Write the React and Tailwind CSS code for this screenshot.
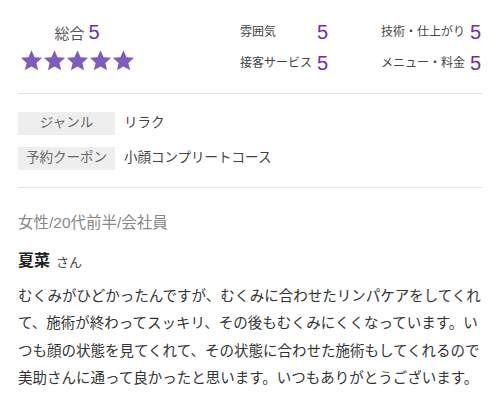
import React from 'react';

const font = { fontFamily: '"Liberation Sans", "Noto Sans CJK JP", sans-serif' };

const Star = () => (
    <svg viewBox="0 0 24 24" className="w-[23px] h-[23px]" fill="#7d5cc0">
        <path d="M12 1.2l3.2 7.3 7.9.7-6 5.3 1.8 7.8L12 18.2l-6.9 4.1 1.8-7.8-6-5.3 7.9-.7z" />
    </svg>
);

const Score = ({ label }) => (
    <div className="flex items-center justify-between whitespace-nowrap">
        <span className="text-[12px] text-[#444] leading-none">{label}</span>
        <span className="text-[20px] text-[#6a2fb0] leading-none">5</span>
    </div>
);

const App = () => (
    <div className="w-[500px] h-[400px] bg-white overflow-hidden px-[18px]" style={font}>
        <div className="flex h-[94px] border-b border-[#e2e2e2]">
            <div className="w-[118px] flex flex-col items-center pt-[22px]">
                <div className="flex items-end gap-[4px] leading-none">
                    <span className="text-[15px] text-[#555] pb-[1px]">総合</span>
                    <span className="text-[20px] text-[#6a2fb0]">5</span>
                </div>
                <div className="flex gap-0 mt-[7px]">
                    <Star /><Star /><Star /><Star /><Star />
                </div>
            </div>
            <div className="ml-[104px] grid grid-cols-[88px_100px] gap-x-[53px] gap-y-[11px] pt-[22px] h-fit">
                <Score label="雰囲気" />
                <Score label="技術・仕上がり" />
                <Score label="接客サービス" />
                <Score label="メニュー・料金" />
            </div>
        </div>

        <div className="flex flex-col gap-[12px] pt-[18px] pb-[17px] border-b border-[#e2e2e2]">
            <div className="flex items-center">
                <span className="w-[97px] h-[23px] bg-[#eeeeee] text-[#666] text-[13.5px] flex items-center justify-center">ジャンル</span>
                <span className="ml-[9px] text-[13.5px] text-[#444]">リラク</span>
            </div>
            <div className="flex items-center">
                <span className="w-[97px] h-[23px] bg-[#eeeeee] text-[#666] text-[13.5px] flex items-center justify-center">予約クーポン</span>
                <span className="ml-[9px] text-[13.5px] text-[#444]">小顔コンプリートコース</span>
            </div>
        </div>

        <div className="pt-[27px] text-[15.5px] text-[#888] leading-none">女性/20代前半/会社員</div>
        <div className="pt-[22px] flex items-end gap-[6px] leading-none">
            <span className="text-[16px] font-bold text-[#222]">夏菜</span>
            <span className="text-[13px] text-[#444]">さん</span>
        </div>
        <p className="mt-[14px] w-[470px] text-[14.5px] leading-[27.5px] text-[#333]">
            むくみがひどかったんですが、むくみに合わせたリンパケアをしてくれて、施術が終わってスッキリ、その後もむくみにくくなっています。いつも顔の状態を見てくれて、その状態に合わせた施術もしてくれるので美助さんに通って良かったと思います。いつもありがとうございます。
        </p>
    </div>
);

export default App;
